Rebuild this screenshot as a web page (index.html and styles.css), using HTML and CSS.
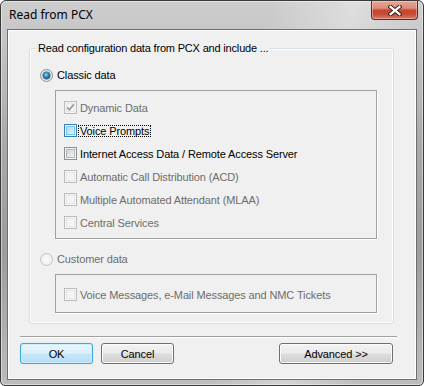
FILE: index.html
```html
<!DOCTYPE html>
<html>
<head>
<meta charset="utf-8">
<title>Read from PCX</title>
<link rel="stylesheet" href="styles.css">
</head>
<body>
<div class="window">
  <div class="titlebar">
    <span class="title">Read from PCX</span>
    <div class="close">
      <svg width="14" height="11" viewBox="0 0 14 11">
        <path d="M2.5 1.8 L11.5 9.2 M11.5 1.8 L2.5 9.2" stroke="#3e1f19" stroke-width="4.2" stroke-linecap="square" fill="none"/>
        <path d="M2.5 1.8 L11.5 9.2 M11.5 1.8 L2.5 9.2" stroke="#ffffff" stroke-width="2.2" stroke-linecap="square" fill="none"/>
      </svg>
    </div>
  </div>
  <div class="client">
    <fieldset class="group">
      <legend class="group-title">Read configuration data from PCX and include ...</legend>
      <div class="group-body">
        <div class="radio-row">
          <span class="radio checked"><span class="dot"></span></span>
          <span class="label">Classic data</span>
        </div>
        <div class="panel panel-classic">
          <div class="cb-row disabled">
            <span class="cb">
              <svg width="11" height="11" viewBox="0 0 11 11"><path d="M2.2 5.4 L4.4 7.8 L8.8 2.4" stroke="#9a9a9a" stroke-width="1.7" fill="none"/></svg>
            </span>
            <span class="label">Dynamic Data</span>
          </div>
          <div class="cb-row">
            <span class="cb hover"></span>
            <span class="label focus">Voice Prompts</span>
          </div>
          <div class="cb-row">
            <span class="cb"></span>
            <span class="label">Internet Access Data / Remote Access Server</span>
          </div>
          <div class="cb-row disabled">
            <span class="cb"></span>
            <span class="label">Automatic Call Distribution (ACD)</span>
          </div>
          <div class="cb-row disabled">
            <span class="cb"></span>
            <span class="label">Multiple Automated Attendant (MLAA)</span>
          </div>
          <div class="cb-row disabled">
            <span class="cb"></span>
            <span class="label">Central Services</span>
          </div>
        </div>
        <div class="radio-row disabled second">
          <span class="radio"></span>
          <span class="label">Customer data</span>
        </div>
        <div class="panel panel-customer">
          <div class="cb-row disabled">
            <span class="cb"></span>
            <span class="label">Voice Messages, e-Mail Messages and NMC Tickets</span>
          </div>
        </div>
      </div>
    </fieldset>
    <div class="separator"></div>
    <div class="buttons">
      <button class="btn default">OK</button>
      <button class="btn">Cancel</button>
      <button class="btn advanced">Advanced &gt;&gt;</button>
    </div>
  </div>
</div>
</body>
</html>
```

FILE: styles.css
```css
* { box-sizing: border-box; }
html, body { margin: 0; padding: 0; }
body {
  width: 424px;
  height: 386px;
  overflow: hidden;
  background: #ffffff;
  font-family: "Liberation Sans", Arial, sans-serif;
  font-size: 11px;
  letter-spacing: -0.12px;
  color: #000;
}

.window {
  width: 424px;
  height: 386px;
  border: 1px solid #3a3a3a;
  border-radius: 6px 6px 5px 5px;
  background:
    linear-gradient(100deg, rgba(255,255,255,0) 55%, rgba(255,255,255,0.35) 72%, rgba(255,255,255,0) 88%),
    linear-gradient(to bottom, #cdcdcd 0, #c8c8c8 28px, #a8a8a8 150px, #9c9c9c 250px, #bdbdbd 386px);
  display: flex;
  flex-direction: column;
  box-shadow: inset 0 0 0 1px rgba(255,255,255,0.45);
}

.titlebar {
  height: 28px;
  display: flex;
  align-items: flex-start;
  padding-left: 8px;
}
.title {
  font-family: "Noto Sans", "Liberation Sans", sans-serif;
  font-size: 12px;
  letter-spacing: 0;
  line-height: 16px;
  margin-top: 6px;
  color: #000;
}
.close {
  margin-left: auto;
  margin-right: 5px;
  width: 47px;
  height: 19px;
  border: 1px solid #5a2a22;
  border-top: none;
  border-radius: 0 0 4px 4px;
  background: linear-gradient(to bottom, #e6a898 0%, #dc8b79 40%, #c6462f 52%, #c44a34 72%, #d57a68 100%);
  box-shadow: inset 0 0 0 1px rgba(255,220,210,0.45);
  display: flex;
  align-items: center;
  justify-content: center;
}

.client {
  margin: 0 6px;
  height: 351px;
  border: 1px solid #6f6f6f;
  box-shadow: inset 0 0 0 1px #ffffff;
  background: #f0f0f0;
  padding: 12px 12px 0 12px;
}

.group {
  margin: 0 0 0 9px;
  padding: 0;
  width: 365px;
  min-width: 0;
  border: 1px solid #d5dfe5;
  border-radius: 3px;
  box-shadow: inset 0 0 0 1px #ffffff;
}
.group-title {
  margin-left: 6px;
  padding: 0 2px;
  line-height: 13px;
  font-size: 11px;
  letter-spacing: -0.18px;
  background: #f0f0f0;
}
.group-body {
  padding: 13px 16px 10px 10px;
}

.radio-row {
  height: 14px;
  display: flex;
  align-items: center;
}
.radio-row.second { margin-top: 13px; }
.radio-row .label { margin-left: 4px; }
.disabled .label { color: #6d6d6d; }

.radio {
  width: 13px;
  height: 13px;
  border-radius: 50%;
  border: 1px solid #8e8f8f;
  background: radial-gradient(circle at 50% 50%, #ffffff 0, #f4f4f4 50%, #d2d4d6 100%);
  display: flex;
  align-items: center;
  justify-content: center;
}
.radio .dot {
  width: 7px;
  height: 7px;
  border-radius: 50%;
  background: radial-gradient(circle at 45% 40%, #9fdcf8 0, #3b8fc8 35%, #15527f 70%, #0c3556 100%);
  box-shadow: 0 0 0 0.5px #1c4b73;
}
.disabled .radio {
  border-color: #c3c3c3;
  background: radial-gradient(circle at 50% 50%, #fafafa 0, #f1f1f1 60%, #e2e2e2 100%);
}

.panel {
  margin: 8px 0 0 15px;
  border: 1px solid #a0a0a0;
  box-shadow: 1px 1px 0 #ffffff;
}
.panel-classic { padding: 5px 0 4px 8px; }
.panel-customer { padding: 8px 0 6px 8px; }

.cb-row {
  height: 23px;
  display: flex;
  align-items: center;
}
.cb-row .label { margin-left: 3px; white-space: nowrap; }

.cb {
  width: 13px;
  height: 13px;
  border: 1px solid #8e8f8f;
  background: linear-gradient(135deg, #c5cad0 0%, #e3e5e8 55%, #f8f8f8 100%);
  box-shadow: inset 0 0 0 1px #f4f4f4, inset 0 0 0 2px #b4b8bd;
  display: flex;
  align-items: center;
  justify-content: center;
}
.cb.hover {
  border-color: #3c7fb1;
  background: linear-gradient(135deg, #a9d8f5 0%, #c7e8fb 55%, #e9f6fe 100%);
  box-shadow: inset 0 0 0 1px #def9fa, inset 0 0 0 2px #79c6f9;
}
.disabled .cb {
  border-color: #bcbcbc;
  background: #f4f4f4;
  box-shadow: inset 0 0 0 1px #f4f4f4, inset 0 0 0 2px #e6e6e6;
}

.label.focus {
  border: 1px dotted #000;
  line-height: 10px;
  padding: 0 1px;
  margin-left: 1px;
}

.separator {
  margin-top: 12px;
  width: 377px;
  height: 2px;
  border-top: 1px solid #a0a0a0;
  border-bottom: 1px solid #ffffff;
}

.buttons {
  margin-top: 5px;
  width: 373px;
  display: flex;
  gap: 8px;
}
.btn {
  height: 21px;
  width: 73px;
  padding: 0;
  border: 1px solid #707070;
  border-radius: 3px;
  background: linear-gradient(to bottom, #f2f2f2 0%, #ebebeb 48%, #dddddd 52%, #cfcfcf 100%);
  box-shadow: inset 0 0 0 1px #fbfbfb;
  font-family: "Liberation Sans", Arial, sans-serif;
  font-size: 11px;
  letter-spacing: -0.12px;
  color: #000;
}
.btn.default {
  border-color: #3ca8e0;
  background: linear-gradient(to bottom, #e8f5fc 0%, #dcf0fb 48%, #c6e7f9 52%, #b4def6 100%);
  box-shadow: inset 0 0 0 1px #cfeefd, 0 0 1px #7fd0f5;
}
.btn.advanced {
  width: 114px;
  margin-left: auto;
}
```
